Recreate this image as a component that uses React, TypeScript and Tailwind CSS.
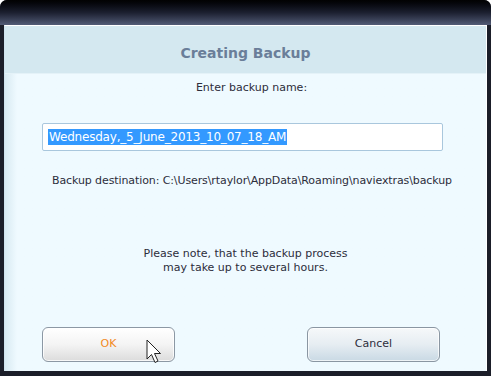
import React from 'react';

const font = { fontFamily: '"DejaVu Sans", Tahoma, Verdana, sans-serif' };

const Cursor: React.FC = () => (
  <svg className="absolute left-[146px] top-[339px]" width="17" height="26" viewBox="0 0 17 26">
    <path d="M1 1 L1 20 L5.5 15.5 L9 23.5 L12 22 L8.5 14.5 L14.5 14.5 Z" fill="#fff" stroke="#222" strokeWidth="1" strokeLinejoin="round" />
  </svg>
);

export default function App() {
  return (
    <div className="relative w-[491px] h-[376px] bg-[#1b1e29] rounded-t-[7px] flex flex-col overflow-hidden" style={font}>
      {/* title bar */}
      <div className="h-[25px] shrink-0 bg-gradient-to-b from-[#020203] via-[#1c2030] to-[#525b76]" />

      {/* dialog panel */}
      <div className="flex-1 mx-[4px] mb-[5px] flex flex-col border-t border-l border-r border-t-white border-l-[#cfe3ee] border-r-white bg-[#effaff]">
        <div className="h-[48px] shrink-0 flex items-center justify-center pt-[7px] bg-[#d4e8f0] border-b border-[#e4f2f8]">
          <span className="text-[14px] font-bold text-[#6a7e99]">Creating Backup</span>
        </div>

        <div className="flex-1 flex flex-col bg-gradient-to-r from-[#d8eaf2] via-[#effaff] via-[2.5%] to-[#effaff]">
          <p className="mt-[7px] ml-[12px] text-center text-[11px] text-[#2c2d3b] leading-[14px]">Enter backup name:</p>

          <div className="mt-[28px] ml-[37px] w-[401px] h-[28px] bg-white border border-[#a9c7dd] rounded-[2px] flex items-center pl-[5px]">
            <span className="bg-[#3399ff] text-white text-[12px] leading-[16px] pl-[1px] pr-[1px] tracking-[-0.2px]">
              Wednesday,_5_June_2013_10_07_18_AM
            </span>
          </div>

          <p className="mt-[23px] ml-[47px] text-[11px] text-[#2c2d3b] leading-[14px] tracking-[-0.1px]">
            Backup destination: C:\Users\rtaylor\AppData\Roaming\naviextras\backup
          </p>

          <div className="mt-[59px] text-center text-[11px] text-[#2c2d3b] leading-[14px]">
            <p>Please note, that the backup process</p>
            <p>may take up to several hours.</p>
          </div>

          <div className="mt-[52px] flex pl-[37px] gap-[132px]">
            <button className="w-[133px] h-[35px] rounded-[6px] border border-[#8c98a4] bg-gradient-to-b from-white via-[#f4f4f4] to-[#dcdcdc] shadow-[inset_0_0_0_1px_rgba(255,255,255,0.8)] text-[11px] text-[#f28a1e]">
              OK
            </button>
            <button className="w-[133px] h-[35px] rounded-[6px] border border-[#8a96a2] bg-gradient-to-b from-[#f6f8fa] via-[#e6edf2] to-[#c9d9e4] shadow-[inset_0_0_0_1px_rgba(255,255,255,0.7)] text-[11px] text-[#2c2d3b]">
              Cancel
            </button>
          </div>
        </div>
      </div>

      <Cursor />
    </div>
  );
}
